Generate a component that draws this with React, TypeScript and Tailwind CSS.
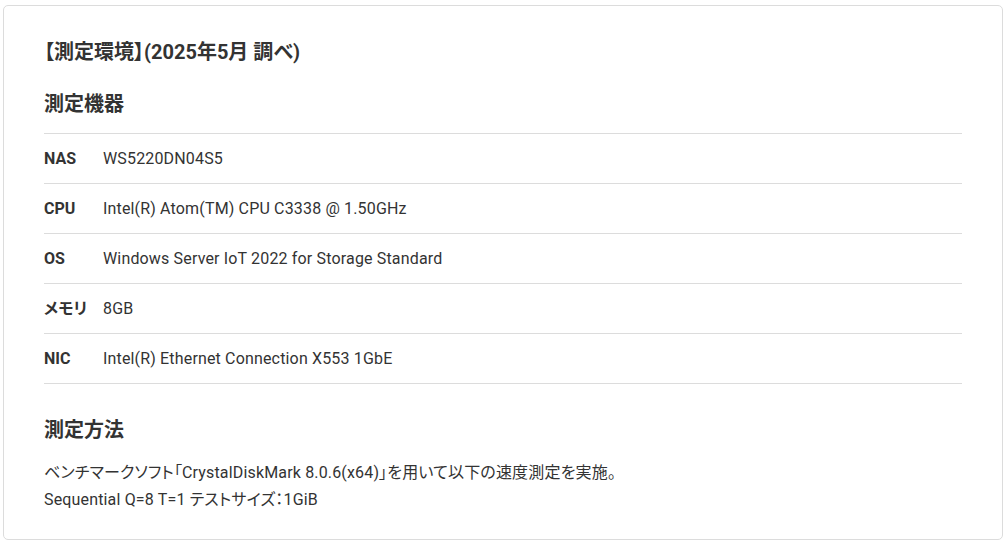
import React from "react";

const specs: { label: string; value: string }[] = [
  { label: "NAS", value: "WS5220DN04S5" },
  { label: "CPU", value: "Intel(R) Atom(TM) CPU C3338 @ 1.50GHz" },
  { label: "OS", value: "Windows Server IoT 2022 for Storage Standard" },
  { label: "メモリ", value: "8GB" },
  { label: "NIC", value: "Intel(R) Ethernet Connection X553 1GbE" },
];

export default function App() {
  return (
    <div
      className="w-[1006px] h-[541px] bg-white text-[#333] pt-[5px] pl-[3px] [font-feature-settings:'palt']"
      style={{ fontFamily: 'Roboto, "Noto Sans CJK JP", sans-serif' }}
    >
      <section className="w-[1000px] h-[535px] border border-[#dcdcdc] rounded-[5px] px-10 pt-[31px]">
        {/* Title */}
        <h2 className="text-[20px] leading-[30px] font-bold">
          【測定環境】(2025年5月 調べ)
        </h2>

        {/* Equipment */}
        <h3 className="mt-[22px] mb-[14px] text-[20px] leading-[30px] font-bold">
          測定機器
        </h3>
        <dl className="border-t border-[#dcdcdc]">
          {specs.map((s) => (
            <div
              key={s.label}
              className="flex items-center h-[50px] border-b border-[#dcdcdc] text-[16px]"
            >
              <dt className="w-[59px] font-bold">{s.label}</dt>
              <dd className="tracking-[0.01em]">{s.value}</dd>
            </div>
          ))}
        </dl>

        {/* Method */}
        <h3 className="mt-[31px] text-[20px] leading-[30px] font-bold">
          測定方法
        </h3>
        <p className="mt-[14px] text-[16px] leading-[27px] tracking-[0.01em]">
          ベンチマークソフト「CrystalDiskMark 8.0.6(x64)」を用いて以下の速度測定を実施。
          <br />
          Sequential Q=8 T=1 テストサイズ：1GiB
        </p>
      </section>
    </div>
  );
}
